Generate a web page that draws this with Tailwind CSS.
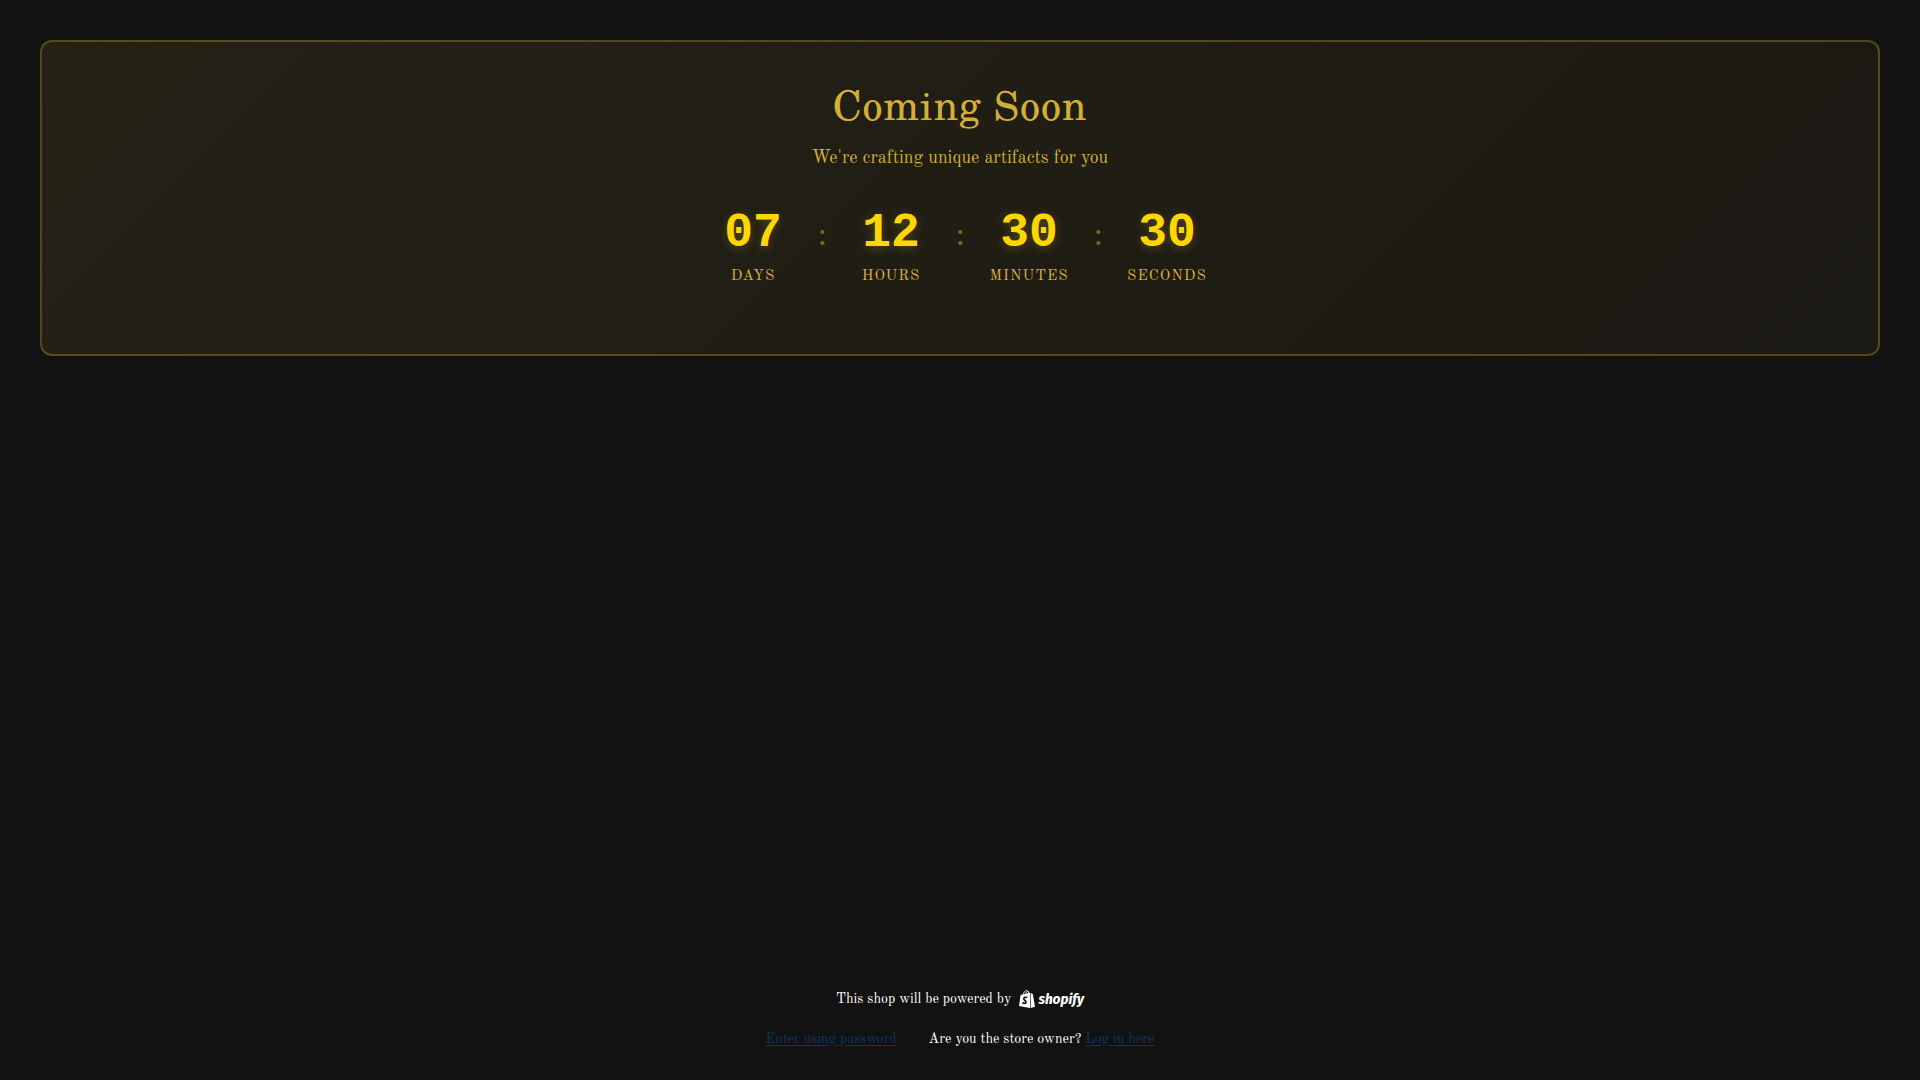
<!DOCTYPE html>
<html lang="en">
  <head>
    <meta charset="UTF-8" />
    <meta name="viewport" content="width=device-width, initial-scale=1.0" />
    <title>Coming Soon</title>
    <script src="https://cdn.jsdelivr.net/npm/@tailwindcss/browser@4"></script>
  </head>
  <body
    class="min-h-screen flex flex-col justify-between bg-[#121212] text-white font-['Old_Standard_TT','Liberation_Serif',serif]"
  >
    <main class="p-10">
      <section
        class="rounded-xl border-2 border-[#d4af37]/30 bg-linear-135 from-[#d4af37]/10 to-[#d4af37]/5 px-8 pt-10 pb-[65px] text-center text-[#d4af37]"
      >
        <h1
          class="font-['TeX_Gyre_Schola','Liberation_Serif',serif] text-[40px] leading-11 tracking-[1px]"
        >
          Coming Soon
        </h1>
        <p class="mt-[18px] text-lg leading-7">
          We're crafting unique artifacts for you
        </p>

        <div class="mt-[37px] flex justify-center items-center gap-6" role="timer">
          <div class="min-w-20">
            <div
              id="days"
              class="font-['Liberation_Mono',monospace] text-5xl leading-12 font-bold text-[#ffd700] text-shadow-[0_2px_10px_rgb(212_175_55/0.3)]"
            >07</div>
            <div class="mt-2 text-[15px] leading-6 tracking-[1px] uppercase">Days</div>
          </div>
          <span class="w-[10px] pb-8 font-['TeX_Gyre_Schola','Liberation_Serif',serif] text-[32px] leading-8 opacity-50">:</span>
          <div class="min-w-20">
            <div
              id="hours"
              class="font-['Liberation_Mono',monospace] text-5xl leading-12 font-bold text-[#ffd700] text-shadow-[0_2px_10px_rgb(212_175_55/0.3)]"
            >12</div>
            <div class="mt-2 text-[15px] leading-6 tracking-[1px] uppercase">Hours</div>
          </div>
          <span class="w-[10px] pb-8 font-['TeX_Gyre_Schola','Liberation_Serif',serif] text-[32px] leading-8 opacity-50">:</span>
          <div class="min-w-20">
            <div
              id="minutes"
              class="font-['Liberation_Mono',monospace] text-5xl leading-12 font-bold text-[#ffd700] text-shadow-[0_2px_10px_rgb(212_175_55/0.3)]"
            >30</div>
            <div class="mt-2 text-[15px] leading-6 tracking-[1px] uppercase">Minutes</div>
          </div>
          <span class="w-[10px] pb-8 font-['TeX_Gyre_Schola','Liberation_Serif',serif] text-[32px] leading-8 opacity-50">:</span>
          <div class="min-w-20">
            <div
              id="seconds"
              class="font-['Liberation_Mono',monospace] text-5xl leading-12 font-bold text-[#ffd700] text-shadow-[0_2px_10px_rgb(212_175_55/0.3)]"
            >30</div>
            <div class="mt-2 text-[15px] leading-6 tracking-[1px] uppercase">Seconds</div>
          </div>
        </div>
      </section>
    </main>

    <footer class="flex flex-col items-center gap-5 pb-[31px] text-sm leading-5">
      <div class="flex items-center gap-2">
        <span>This shop will be powered by</span>
        <a href="#" aria-label="Shopify" class="flex items-center gap-[3px]">
          <!-- shopping bag -->
          <svg class="w-4 h-[18px]" viewBox="0 0 16 18" fill="none">
            <path d="M1.6 5 11 2.6V18L0 16Z" fill="white" />
            <path d="M11.6 2.9 13.8 4 16 16.8 11.6 18Z" fill="white" />
            <path d="M4 5C4.4 2.4 6 .6 7.5.6S9.6 2.2 9.6 4M6.5 4C7 2 8.3.9 9.4 1.4" stroke="white" stroke-width="0.8" />
            <path d="M8.3 7.6C6.7 6.8 4.7 7.4 4.8 9 4.9 10.5 7.2 10.7 7 12.3 6.8 13.8 4.7 13.4 3.5 12.5" stroke="#121212" stroke-width="1.7" />
          </svg>
          <span class="font-['Fira_Sans_Condensed','Open_Sans',sans-serif] text-[15px] leading-5 font-bold italic">shopify</span>
        </a>
      </div>
      <div class="flex items-center gap-8">
        <a href="#" class="text-[#0f3460] underline underline-offset-2">Enter using password</a>
        <p>
          Are you the store owner?
          <a href="#" class="text-[#0f3460] underline underline-offset-2">Log in here</a>
        </p>
      </div>
    </footer>
  </body>
</html>
